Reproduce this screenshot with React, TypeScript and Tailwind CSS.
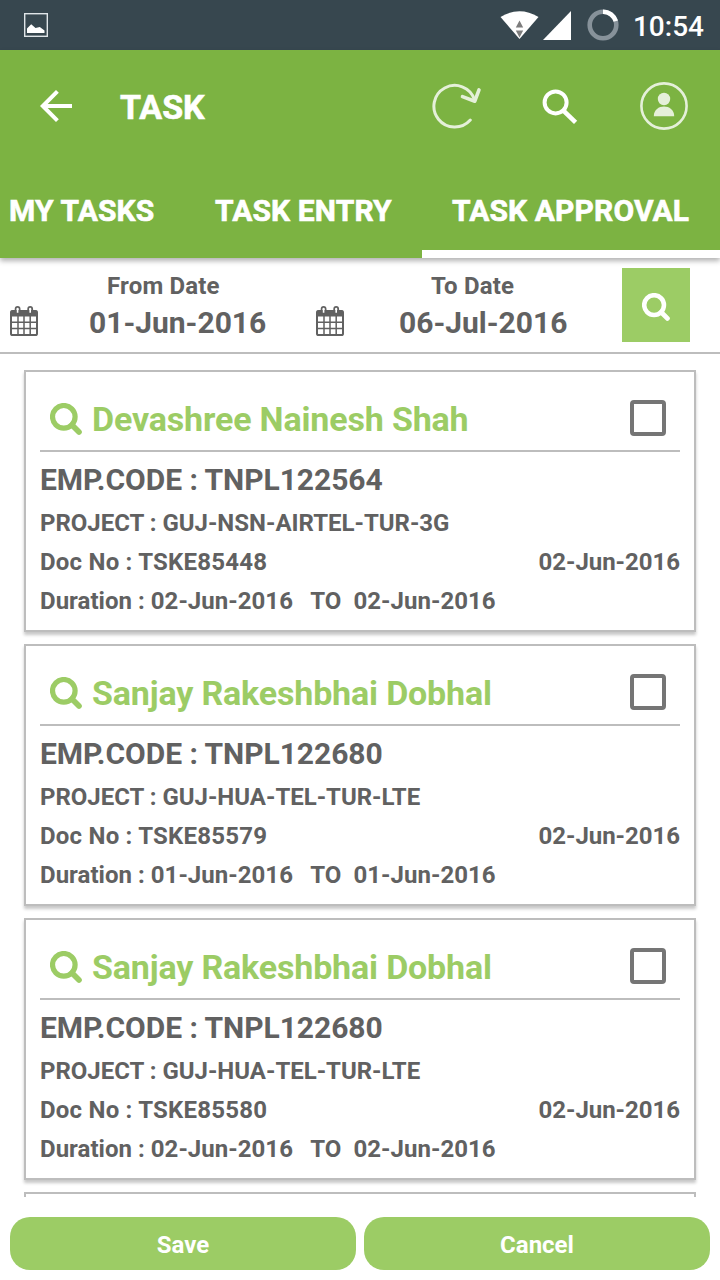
interface Task {
  name: string;
  empCode: string;
  project: string;
  docNo: string;
  date: string;
  from: string;
  to: string;
}

const tasks: Task[] = [
  {
    name: "Devashree Nainesh Shah",
    empCode: "TNPL122564",
    project: "GUJ-NSN-AIRTEL-TUR-3G",
    docNo: "TSKE85448",
    date: "02-Jun-2016",
    from: "02-Jun-2016",
    to: "02-Jun-2016",
  },
  {
    name: "Sanjay Rakeshbhai Dobhal",
    empCode: "TNPL122680",
    project: "GUJ-HUA-TEL-TUR-LTE",
    docNo: "TSKE85579",
    date: "02-Jun-2016",
    from: "01-Jun-2016",
    to: "01-Jun-2016",
  },
  {
    name: "Sanjay Rakeshbhai Dobhal",
    empCode: "TNPL122680",
    project: "GUJ-HUA-TEL-TUR-LTE",
    docNo: "TSKE85580",
    date: "02-Jun-2016",
    from: "02-Jun-2016",
    to: "02-Jun-2016",
  },
];

function SearchIcon({ className }: { className: string }) {
  return (
    <svg viewBox="0 0 32 32" className={className} fill="none" stroke="currentColor">
      <circle cx="13.8" cy="13.8" r="11.3" strokeWidth="5.2" />
      <path d="M22 22L29 29" strokeWidth="5.6" strokeLinecap="round" />
    </svg>
  );
}

function CalendarIcon() {
  return (
    <svg viewBox="0 0 28 30" className="h-[30px] w-7 shrink-0" fill="none" stroke="currentColor">
      <rect x="1" y="5" width="26" height="24" rx="1.6" strokeWidth="2" />
      <path d="M0.8 4.5H27.2V10.5H0.8z" fill="currentColor" stroke="none" />
      <path d="M1 16.3H27M1 22.6H27M8 10V29M14 10V29M20.2 10V29" strokeWidth="1.5" />
      <rect x="5.6" y="0.9" width="4" height="7.4" rx="2" strokeWidth="1.8" />
      <rect x="18.2" y="0.9" width="4" height="7.4" rx="2" strokeWidth="1.8" />
      <path d="M7.6 2.6V6.8M20.2 2.6V6.8" stroke="white" strokeWidth="1.6" />
    </svg>
  );
}

function StatusBar() {
  return (
    <div className="flex h-[50px] shrink-0 items-center bg-[#37474f] pr-4 pl-6 text-white">
      <svg viewBox="0 0 24 24" className="h-6 w-6">
        <rect x="0.7" y="0.7" width="22.6" height="22.6" fill="none" stroke="#dfe5e8" strokeWidth="1.4" />
        <path d="M3 20V15.5L7.2 11.2L11.5 15L15.8 14L20.5 17.5V20z" fill="white" />
      </svg>
      <svg viewBox="0 0 39 30" className="ml-auto h-[30px] w-[39px]">
        <path d="M0.5 7Q19.5 -4.6 38.5 7L19.5 29z" fill="white" />
        <path d="M15.8 17.5L19.5 10.5L23.2 17.5zM15.8 20.5H23.2L19.5 27.5z" fill="#7d7d7d" />
      </svg>
      <svg viewBox="0 0 28 29" className="ml-1 h-[29px] w-7">
        <path d="M28 0V29H0z" fill="white" />
      </svg>
      <svg viewBox="0 0 32 32" className="ml-4 h-8 w-8" fill="none" strokeWidth="4.6">
        <circle cx="16" cy="16" r="13.3" stroke="#87929a" />
        <path d="M16 2.7A13.3 13.3 0 0 1 28.8 12.2" stroke="white" />
      </svg>
      <span className="mt-[3px] ml-[14px] text-[28px] leading-none font-medium">10:54</span>
    </div>
  );
}

function AppBar() {
  return (
    <header className="z-10 h-[208px] shrink-0 bg-[#7cb342] text-white shadow-[0_3px_5px_rgba(0,0,0,0.3)]">
      <div className="flex h-28 items-center pr-8 pl-10">
        <svg viewBox="0 0 32 32" className="h-8 w-8" fill="none" stroke="white" strokeWidth="4">
          <path d="M17.4 1.4L2.8 16L17.4 30.6M2.8 16H32" />
        </svg>
        <h1 className="mt-[2px] ml-12 text-[34px] leading-none font-bold [-webkit-text-stroke:0.6px]">TASK</h1>
        <svg viewBox="0 0 50 48" className="ml-auto h-12 w-[50px]" fill="none" stroke="#e5f0d9" strokeWidth="3" strokeLinecap="round" strokeLinejoin="round">
          <path d="M38.3 38A20.8 20.8 0 1 1 42.4 17.5" />
          <path d="M30.5 14.6L42.8 19.2L47 7.9" strokeWidth="3.6" />
        </svg>
        <svg viewBox="0 0 36 36" className="mt-px ml-[60px] h-9 w-9" fill="none" stroke="white">
          <circle cx="13.6" cy="13.4" r="11" strokeWidth="4" />
          <path d="M21.4 21.6L33.6 33.4" strokeWidth="4.6" />
        </svg>
        <svg viewBox="0 0 48 48" className="ml-[62px] h-12 w-12" fill="#e5f0d9">
          <circle cx="24" cy="24" r="22.6" fill="none" stroke="#e5f0d9" strokeWidth="2.6" />
          <circle cx="24" cy="17" r="6.2" />
          <path d="M13.8 34.2C13.8 21.4 34.2 21.4 34.2 34.2z" />
        </svg>
      </div>
      <nav className="flex h-24 text-[30px] leading-none font-bold tracking-[0.13px] whitespace-nowrap [-webkit-text-stroke:0.6px]">
        <div className="flex w-[185px] items-center pt-[2px] pl-[9px]">MY TASKS</div>
        <div className="flex w-[237px] items-center pt-[2px] pl-[30px]">TASK ENTRY</div>
        <div className="flex w-[298px] items-center border-b-8 border-white pt-[10px] pl-[30px]">TASK APPROVAL</div>
      </nav>
    </header>
  );
}

function DateFilter() {
  return (
    <div className="flex h-24 shrink-0 border-b-2 border-[#bdbdbd] pt-[10px]">
      <div className="flex w-[306px] pl-[10px]">
        <div className="pt-[38px]">
          <CalendarIcon />
        </div>
        <div className="ml-[51px]">
          <div className="pl-[18px] text-2xl leading-9 tracking-[0.18px]">From Date</div>
          <div className="text-[30px] leading-[38px]">01-Jun-2016</div>
        </div>
      </div>
      <div className="flex w-[316px] pl-[10px]">
        <div className="pt-[38px]">
          <CalendarIcon />
        </div>
        <div className="ml-[55px]">
          <div className="pl-8 text-2xl leading-9 tracking-[0.18px]">To Date</div>
          <div className="text-[30px] leading-[38px]">06-Jul-2016</div>
        </div>
      </div>
      <button className="flex h-[74px] w-[68px] items-center justify-center bg-[#9ccc65] pt-[3px] text-white">
        <SearchIcon className="h-7 w-7" />
      </button>
    </div>
  );
}

function TaskCard({ task }: { task: Task }) {
  return (
    <div className="h-[262px] shrink-0 border-2 border-[#bdbdbd] bg-white px-[14px] shadow-[0_3px_3px_rgba(0,0,0,0.22)]">
      <div className="flex h-20 items-center border-b-2 border-[#bdbdbd] pr-[14px] pl-[10px] text-[#9ccc65]">
        <SearchIcon className="mt-4 h-8 w-8" />
        <span className="mt-4 ml-[10px] text-[34px] leading-10 tracking-[-0.16px]">{task.name}</span>
        <span className="mt-[14px] ml-auto h-9 w-9 rounded-[4px] border-4 border-[#757575]" />
      </div>
      <div className="pt-2 text-[30px] leading-10 tracking-[-0.04px]">EMP.CODE : {task.empCode}</div>
      <div className="pt-1 text-2xl leading-[39px]">
        <div className="tracking-[-0.02px]">PROJECT : {task.project}</div>
        <div className="flex justify-between">
          <span className="tracking-[0.22px]">Doc No : {task.docNo}</span>
          <span className="tracking-[-0.03px]">{task.date}</span>
        </div>
        <div className="tracking-[0.03px] whitespace-pre">{`Duration : ${task.from}   TO  ${task.to}`}</div>
      </div>
    </div>
  );
}

export default function App() {
  return (
    <div className="flex h-[1280px] w-[720px] flex-col overflow-hidden bg-white font-[Roboto,sans-serif] font-bold text-[#616161]">
      <StatusBar />
      <AppBar />
      <DateFilter />
      <main className="flex h-[843px] shrink-0 flex-col gap-3 overflow-hidden px-6 pt-4">
        {tasks.map((task) => (
          <TaskCard key={task.docNo} task={task} />
        ))}
        <div className="h-[262px] shrink-0 border-2 border-[#bdbdbd]" />
      </main>
      <footer className="flex gap-2 px-[10px] pt-5 text-2xl leading-none text-white">
        <button className="h-[53px] flex-1 rounded-[20px] bg-[#9ccc65] pt-[2px]">Save</button>
        <button className="h-[53px] flex-1 rounded-[20px] bg-[#9ccc65] pt-[2px]">Cancel</button>
      </footer>
    </div>
  );
}
